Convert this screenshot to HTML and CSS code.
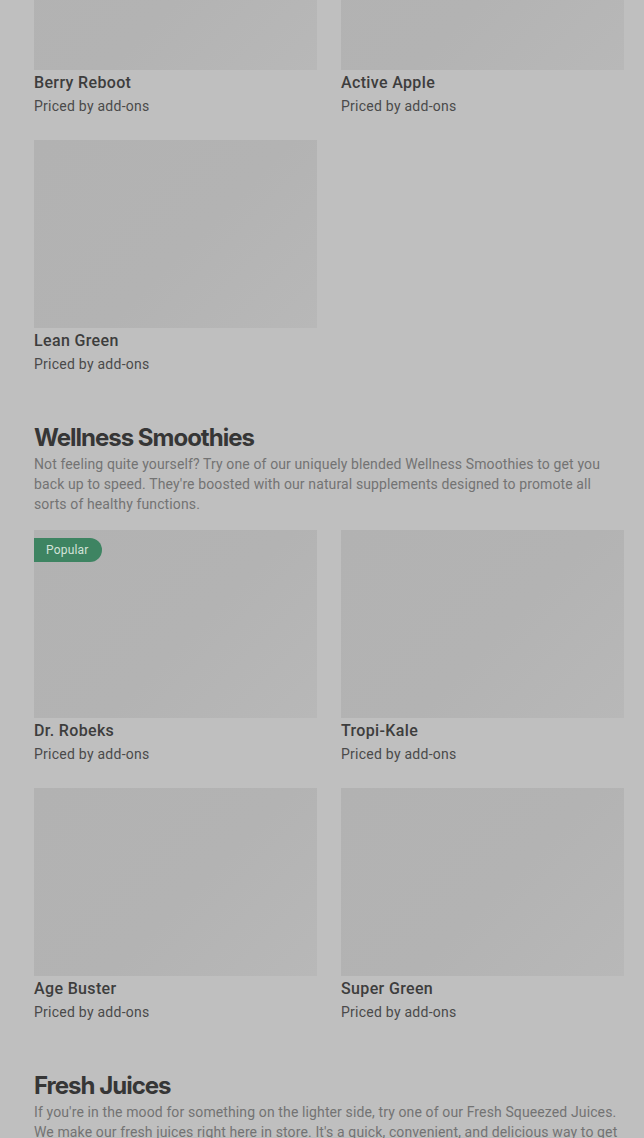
FILE: index.html
```html
<!DOCTYPE html>
<html lang="en">
<head>
  <meta charset="UTF-8">
  <meta name="viewport" content="width=device-width, initial-scale=1.0">
  <title>Menu</title>
  <link rel="stylesheet" href="styles.css">
</head>
<body>

<main class="menu">
  <!-- Section scrolled past: only the last items are still visible -->
  <section class="menu-section first">
    <div class="item-grid">
      <div class="item">
        <div class="item-image"></div>
        <h3 class="item-name">Berry Reboot</h3>
        <p class="item-price">Priced by add-ons</p>
      </div>
      <div class="item">
        <div class="item-image"></div>
        <h3 class="item-name">Active Apple</h3>
        <p class="item-price">Priced by add-ons</p>
      </div>
      <div class="item">
        <div class="item-image"></div>
        <h3 class="item-name">Lean Green</h3>
        <p class="item-price">Priced by add-ons</p>
      </div>
    </div>
  </section>

  <section class="menu-section">
    <h2 class="section-title">Wellness Smoothies</h2>
    <p class="section-desc">Not feeling quite yourself? Try one of our uniquely blended Wellness Smoothies to get you back up to speed. They're boosted with our natural supplements designed to promote all sorts of healthy functions.</p>
    <div class="item-grid">
      <div class="item">
        <div class="item-image">
          <span class="badge">Popular</span>
        </div>
        <h3 class="item-name">Dr. Robeks</h3>
        <p class="item-price">Priced by add-ons</p>
      </div>
      <div class="item">
        <div class="item-image"></div>
        <h3 class="item-name">Tropi-Kale</h3>
        <p class="item-price">Priced by add-ons</p>
      </div>
      <div class="item">
        <div class="item-image"></div>
        <h3 class="item-name">Age Buster</h3>
        <p class="item-price">Priced by add-ons</p>
      </div>
      <div class="item">
        <div class="item-image"></div>
        <h3 class="item-name">Super Green</h3>
        <p class="item-price">Priced by add-ons</p>
      </div>
    </div>
  </section>

  <section class="menu-section">
    <h2 class="section-title">Fresh Juices</h2>
    <p class="section-desc">If you're in the mood for something on the lighter side, try one of our Fresh Squeezed Juices. We make our fresh juices right here in store. It's a quick, convenient, and delicious way to get your daily dose of fruits and vegetables.</p>
  </section>
</main>

</body>
</html>
```

FILE: styles.css
```css
body {
  margin: 0;
  padding: 0;
  background: #bfbfbf;
  font-family: Roboto, "Liberation Sans", sans-serif;
  color: #3b3b3b;
  overflow: hidden;
}

.menu {
  padding: 0 20px 0 34px;
  margin-top: -118px; /* page is scrolled, first images are cut off */
}

.menu-section {
  padding-top: 47px;
}
.menu-section.first {
  padding-top: 0;
}

.section-title {
  margin: 0;
  font-family: Inter, "Noto Sans", sans-serif;
  font-size: 24px;
  font-weight: 700;
  line-height: 32px;
  letter-spacing: -1px;
  color: #363636;
}

.section-desc {
  max-width: 584px;
  margin: 0 0 16px;
  font-size: 14px;
  line-height: 20px;
  letter-spacing: 0.12px;
  color: #737373;
}

.item-grid {
  display: grid;
  grid-template-columns: 283px 283px;
  column-gap: 24px;
  row-gap: 23px;
}

.item-image {
  position: relative;
  height: 188px;
  background: linear-gradient(135deg, #b2b2b2 0%, #b3b3b3 55%, #b8b8b8 100%);
}

.badge {
  position: absolute;
  top: 8px;
  left: 0;
  height: 24px;
  padding: 0 13px 0 12px;
  line-height: 24px;
  font-size: 12px;
  letter-spacing: 0.2px;
  color: #d3e2d9;
  background: #3e8462;
  border-radius: 0 12px 12px 0;
}

.item-name {
  margin: 2px 0 0;
  font-size: 16px;
  font-weight: 500;
  line-height: 22px;
  letter-spacing: 0.35px;
  color: #3d3d3d;
}

.item-price {
  margin: 1px 0 0;
  font-size: 14px;
  line-height: 22px;
  letter-spacing: 0.25px;
  color: #4a4a4a;
}
```
